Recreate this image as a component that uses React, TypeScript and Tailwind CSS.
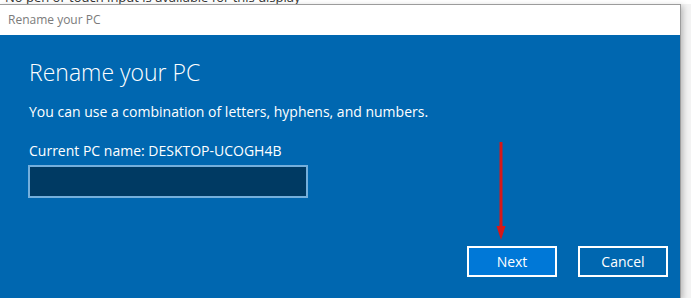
import React from "react";

function App() {
  return (
    <div className="relative w-[691px] h-[298px] overflow-hidden bg-[#f3f3f3] font-['Open_Sans','Noto_Sans',sans-serif]">
      {/* text of the page behind, cut by the window */}
      <div className="h-[4px] overflow-hidden bg-white">
        <p className="mt-[-10px] pl-[5px] text-[13px] leading-[15px] text-[#333]">
          No pen or touch input is available for this display
        </p>
      </div>
      <div className="flex">
        <div className="w-[681px] h-[294px] flex flex-col border-t border-r border-[#9c9c9c] shadow-[2px_2px_6px_rgba(0,0,0,0.25)]">
          <div className="h-[30px] bg-white flex items-center pl-[8px]">
            <span className="text-[12px] text-[#7b7b7b]">Rename your PC</span>
          </div>
          <div className="flex-1 bg-[#0067b0] flex flex-col pl-[29px] pr-[12px] text-white">
            <h1 className="mt-[21px] text-[23px] leading-[32px] font-light">Rename your PC</h1>
            <p className="mt-[14px] text-[14px] leading-[20px]">
              You can use a combination of letters, hyphens, and numbers.
            </p>
            <p className="mt-[19px] text-[14px] leading-[20px]">Current PC name: DESKTOP-UCOGH4B</p>
            <div className="mt-[4px] ml-[-1px] w-[280px] h-[33px] bg-[#003a63] border-2 border-[#74afdc]"></div>
            <div className="mt-[48px] flex justify-end gap-[21px]">
              <button className="w-[90px] h-[31px] bg-[#0078d7] border-2 border-white text-[14px] text-white">
                Next
              </button>
              <button className="w-[90px] h-[31px] bg-[#0067b0] border-2 border-white text-[14px] text-white">
                Cancel
              </button>
            </div>
          </div>
        </div>
      </div>
      {/* red arrow pointing at Next */}
      <svg className="absolute left-[494px] top-[140px]" width="14" height="102" viewBox="0 0 14 102">
        <line x1="7" y1="2" x2="7" y2="90" stroke="#d81818" strokeWidth="3" />
        <polygon points="2.5,86 11.5,86 7,100" fill="#d81818" />
      </svg>
    </div>
  );
}

export default App;
